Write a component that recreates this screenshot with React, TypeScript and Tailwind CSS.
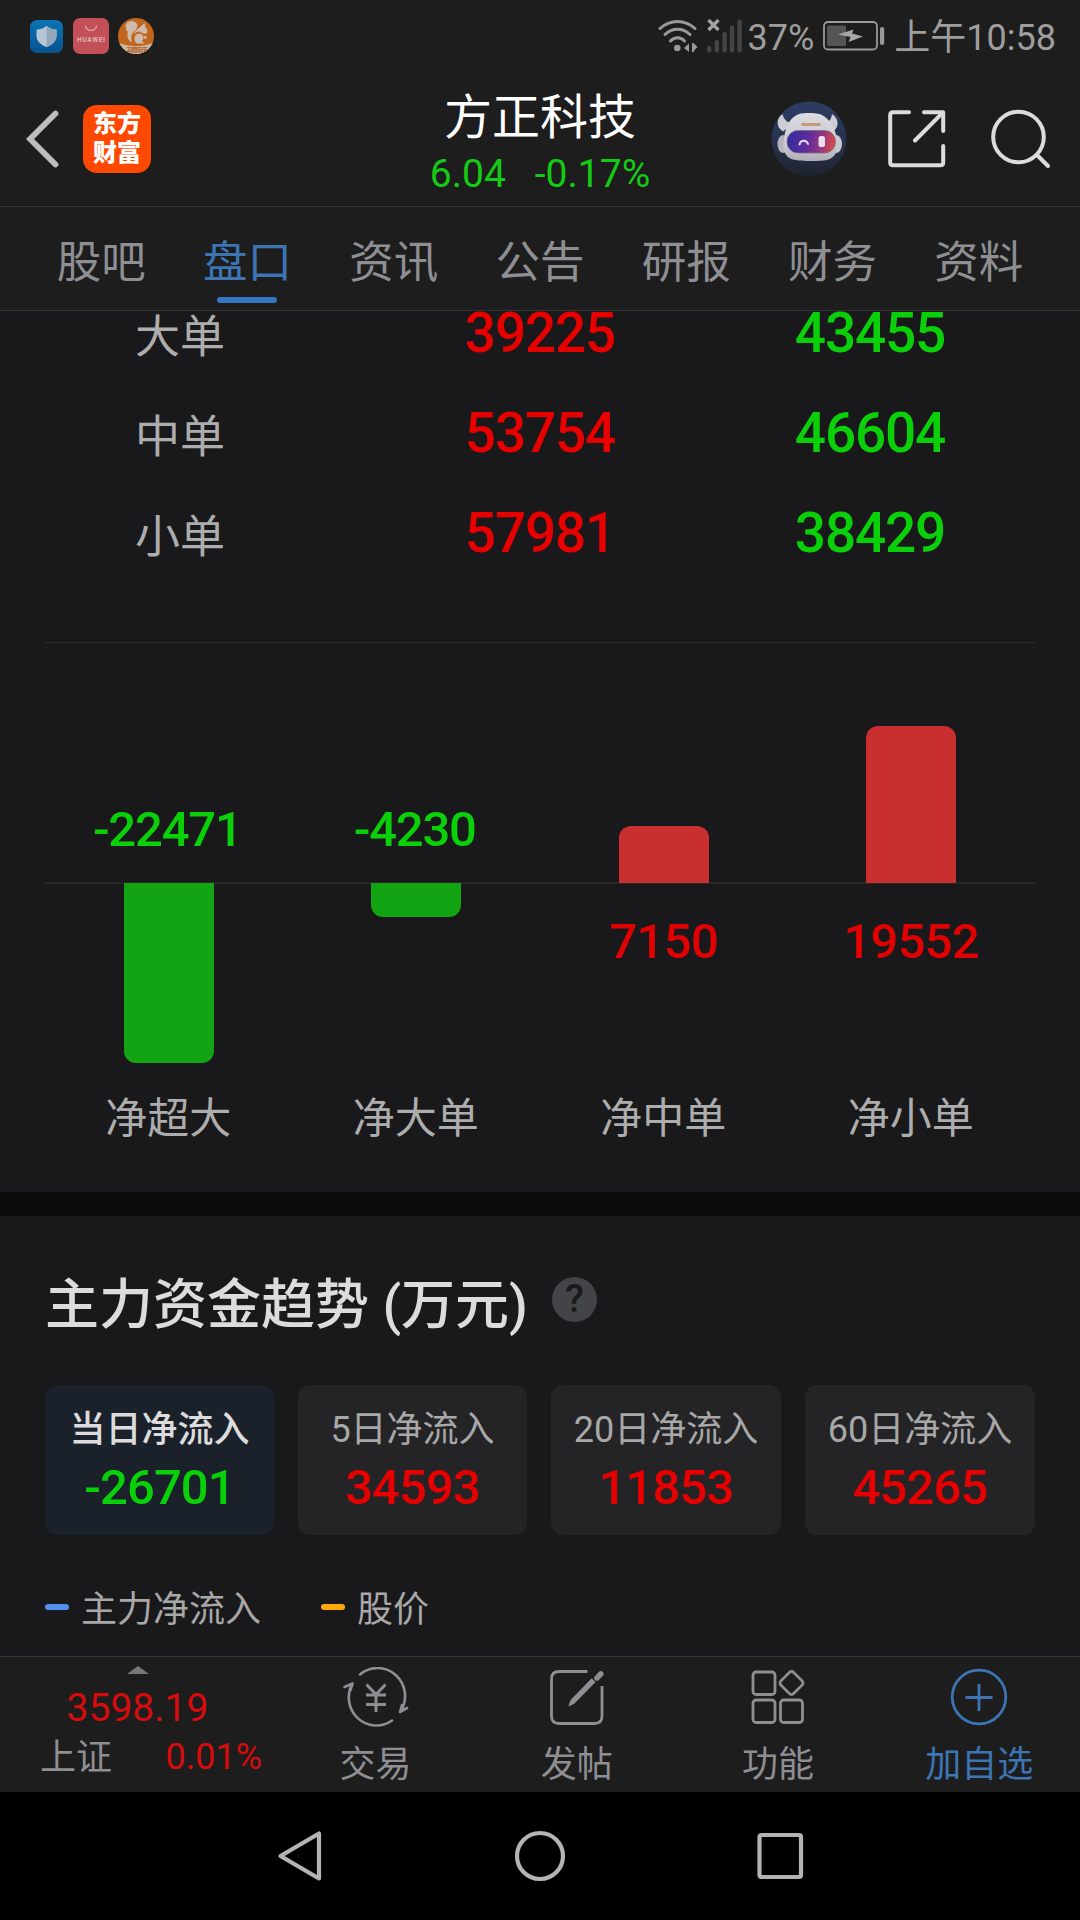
import type { ReactNode } from "react";

const RED = "text-[#e60000]";
const GREEN = "text-[#0ad00a]";

const tabs = ["股吧", "盘口", "资讯", "公告", "研报", "财务", "资料"];
const activeTab = "盘口";

const orders = [
  { label: "大单", buy: "39225", sell: "43455" },
  { label: "中单", buy: "53754", sell: "46604" },
  { label: "小单", buy: "57981", sell: "38429" },
];

const netFlows = [
  { label: "净超大", value: -22471, height: 180 },
  { label: "净大单", value: -4230, height: 34 },
  { label: "净中单", value: 7150, height: 57 },
  { label: "净小单", value: 19552, height: 157 },
];

const periods = [
  { label: "当日净流入", value: -26701 },
  { label: "5日净流入", value: 34593 },
  { label: "20日净流入", value: 11853 },
  { label: "60日净流入", value: 45265 },
];

function ShieldIcon() {
  return (
    <svg width="33" height="33" viewBox="0 0 33 33">
      <defs>
        <linearGradient id="shield-bg" x1="0" y1="0" x2="0" y2="1">
          <stop offset="0" stopColor="#0c74b4" />
          <stop offset="1" stopColor="#06528f" />
        </linearGradient>
      </defs>
      <rect width="33" height="33" rx="7" fill="url(#shield-bg)" />
      <path d="M16.5 6 C19.5 8.3 23 9.5 26.5 9.7 V16 C26.5 21.5 22 25 16.5 27 C11 25 6.5 21.5 6.5 16 V9.7 C10 9.5 13.5 8.3 16.5 6Z" fill="#b5c6d4" />
      <path d="M16.5 6 C19.5 8.3 23 9.5 26.5 9.7 V16 C26.5 21.5 22 25 16.5 27Z" fill="#93a9bb" />
    </svg>
  );
}

function HuaweiIcon() {
  return (
    <svg width="36" height="36" viewBox="0 0 36 36">
      <rect width="36" height="36" rx="7" fill="#c34f57" />
      <path d="M12.5 7.5 C13 14 23 14 23.5 7.5" fill="none" stroke="#dfa9a9" strokeWidth="1.3" />
      <text x="18" y="23.5" textAnchor="middle" textLength="28" fontSize="6.6" fontWeight="700" fontFamily="Roboto, sans-serif" fill="#e0b4b4">
        HUAWEI
      </text>
    </svg>
  );
}

function SquirrelIcon() {
  return (
    <svg width="36" height="36" viewBox="0 0 36 36">
      <defs>
        <clipPath id="squirrel-clip">
          <circle cx="18" cy="18" r="18" />
        </clipPath>
      </defs>
      <g clipPath="url(#squirrel-clip)">
        <rect width="36" height="36" fill="#c2651e" />
        <path d="M0 24 C8 29.5 28 29.5 36 24 V36 H0Z" fill="#c9b8a6" />
        <path d="M8 10 C6 4.5 13 1.5 17 4 C21 6.5 19.5 10.5 16.5 13 C13.5 15.5 12.5 19 14 24.5 C10 22.5 8.5 18 10 13.5 C8.5 13 8 11.5 8 10Z" fill="#cdbcab" />
        <path d="M20 11 L26.5 5 L27.5 9.5 C29.5 11 30 14 28.5 15.5 C26 16.5 24 14.5 21.5 13.5 C18.500 13 16.500 15 16 17.500 C15.800 14.500 17.500 12.500 20 11Z" fill="#cdbcab" />
        <path d="M16.5 20 C17 15.5 22 14.5 24.5 17 C26 18.7 25.8 21 24 23 L26.5 25.5 H19 C17 24.5 16.2 22.5 16.5 20Z" fill="#cdbcab" />
        <circle cx="27.3" cy="19.3" r="1.5" fill="#cdbcab" />
        <text x="19" y="33.6" textAnchor="middle" textLength="21" fontSize="6" fontWeight="700" fontFamily="'Noto Sans CJK SC', sans-serif" fill="#b55a1c">
          22周年庆
        </text>
      </g>
    </svg>
  );
}

function WifiIcon() {
  return (
    <svg width="40" height="34" viewBox="0 0 40 34" fill="none" stroke="#9a9a9a" strokeWidth="3" strokeLinecap="round">
      <path d="M2 9.5 C12 0 27 0 37 9.5" />
      <path d="M7 15.5 C14 8.5 25 8.5 32 15.5" />
      <path d="M12.5 22 C16.5 17.8 22.5 17.8 26.5 22" />
      <circle cx="19.3" cy="29" r="3.3" fill="#9a9a9a" stroke="none" />
      <path d="M31 24.5 V33 L26 29Z M34 24 V33 H36 V31.5 L39.5 28 L35.5 24Z" fill="#9a9a9a" stroke="none" />
    </svg>
  );
}

function SignalIcon() {
  return (
    <svg width="36" height="34" viewBox="0 0 36 34">
      <path d="M1.5 1 L11.5 11 M11.5 1 L1.5 11" stroke="#a3a3a3" strokeWidth="3.4" />
      <g fill="#444">
        <rect x="0" y="27" width="4.4" height="6.5" rx="2" />
        <rect x="7.6" y="21" width="4.4" height="12.5" rx="2" />
        <rect x="15.4" y="13" width="4.4" height="20.5" rx="2" />
        <rect x="22.8" y="6.5" width="4.4" height="27" rx="2" />
        <rect x="30.4" y="0.5" width="4.4" height="33" rx="2" />
      </g>
    </svg>
  );
}

function BatteryIcon() {
  return (
    <svg width="62" height="30" viewBox="0 0 62 30">
      <rect x="1" y="1" width="53" height="27.5" rx="4" fill="none" stroke="#9a9a9a" strokeWidth="1.8" />
      <rect x="4" y="4.5" width="19" height="20.5" rx="1.5" fill="#555" />
      <path d="M15 13.5 L30.5 8.5 L29 12.5 L40 15.5 L25.5 21 L27.5 16Z" fill="#a6a6a6" />
      <rect x="57" y="6" width="4.2" height="18" rx="2" fill="#9a9a9a" />
    </svg>
  );
}

function RobotAvatar() {
  return (
    <svg width="76" height="76" viewBox="0 0 76 76">
      <defs>
        <linearGradient id="avatar-bg" x1="0" y1="0" x2="0" y2="1">
          <stop offset="0" stopColor="#2d3d63" />
          <stop offset="0.6" stopColor="#26304a" />
          <stop offset="1" stopColor="#1f232d" />
        </linearGradient>
        <linearGradient id="avatar-head" x1="0" y1="0" x2="0" y2="1">
          <stop offset="0" stopColor="#dcdbe2" />
          <stop offset="0.7" stopColor="#c9c8d0" />
          <stop offset="1" stopColor="#aeadb6" />
        </linearGradient>
        <linearGradient id="avatar-visor" x1="0" y1="0" x2="1" y2="0.1">
          <stop offset="0" stopColor="#2f2d9c" />
          <stop offset="0.45" stopColor="#5b2b9f" />
          <stop offset="0.75" stopColor="#933580" />
          <stop offset="1" stopColor="#d0474f" />
        </linearGradient>
      </defs>
      <circle cx="38" cy="38" r="37.5" fill="url(#avatar-bg)" />
      <ellipse cx="12" cy="43" rx="5.5" ry="9" fill="#b5b4bd" />
      <ellipse cx="65.5" cy="43" rx="5.5" ry="9" fill="#c9c8cf" />
      <path d="M11.5 13 C5.5 17 4.5 26 12 30.5 L22 22 C16 22 12.500 18 11.500 13Z" fill="#cfced6" />
      <path d="M61 13 C67.500 17 69 26 62 30.500 L52 22 C58 22 60.500 18 61 13Z" fill="#cfced6" />
      <path d="M28 13 C34 11.500 46 11.500 51 14 C59 18 64 27 66 38 C68 50 64 57 56 59 C48 60.500 30 60.500 22 58.500 C14 56 11 50 13 38 C14 26 19 16 28 13Z" fill="url(#avatar-head)" />
      <rect x="16" y="29.5" width="48.5" height="22.500" rx="11" fill="url(#avatar-visor)" stroke="#77707f" strokeWidth="0.8" />
      <rect x="30" y="22" width="20" height="3" rx="1.5" fill="#c79a7c" />
      <path d="M28.5 43.5 C29.5 38.5 35.5 38.5 37 43" fill="none" stroke="#e6dcf2" strokeWidth="2" strokeLinecap="round" />
      <rect x="47.500" y="35" width="6.500" height="11" rx="2.5" fill="#eadff0" />
    </svg>
  );
}

function ShareIcon() {
  return (
    <svg width="58" height="58" viewBox="0 0 58 58" fill="none" stroke="#dcdcdc" strokeWidth="4" strokeLinecap="round" strokeLinejoin="round">
      <path d="M21 2.2 H5 Q2.2 2.2 2.2 5 V52.5 Q2.2 55.2 5 55.2 H52.5 Q55.2 55.2 55.2 52.5 V36" />
      <path d="M36 2.2 H55.2 V21 M55 2.4 L27 30.5" />
    </svg>
  );
}

function SearchIcon() {
  return (
    <svg width="60" height="60" viewBox="0 0 60 60" fill="none" stroke="#dcdcdc" strokeWidth="4" strokeLinecap="round">
      <circle cx="27.5" cy="28" r="25.3" />
      <path d="M46 46 L57 57" />
    </svg>
  );
}

function TradeIcon() {
  return (
    <svg width="66" height="60" viewBox="0 0 66 60" fill="none" stroke="#8e8e93" strokeWidth="2.6" strokeLinecap="round" strokeLinejoin="round">
      <path d="M17 7.5 A27.5 28 0 0 1 57.5 44.5 M64 41 L57 45 L59 38" />
      <path d="M49 53.5 A27.5 28 0 0 1 9.5 16.5 M1.5 20 L9.5 16.5 L7.5 23" />
      <path d="M23.5 17.5 L33 27.5 L42.5 17.5 M33 27.5 V45 M23 28 H43 M23 37.5 H43" strokeWidth="3" strokeLinecap="butt" />
    </svg>
  );
}

function PostIcon() {
  return (
    <svg width="56" height="58" viewBox="0 0 56 58" fill="none" stroke="#8e8e93" strokeWidth="2.8">
      <path d="M38.5 3.5 H10 Q2.5 3.5 2.5 11 V48 Q2.5 55.5 10 55.5 H45.5 Q53 55.5 53 48 V18" />
      <path d="M48 10 L51.8 5.8" strokeWidth="5.5" strokeLinecap="round" />
      <path d="M42.7 10.2 L46.6 14 L25 36 L19.3 38.5 L21.5 32Z" fill="#8e8e93" stroke="none" />
    </svg>
  );
}

function FeatureIcon() {
  return (
    <svg width="54" height="56" viewBox="0 0 54 56" fill="none" stroke="#8e8e93" strokeWidth="2.8">
      <rect x="2" y="3" width="22" height="22.5" rx="3" />
      <rect x="2" y="31" width="22" height="22.5" rx="3" />
      <rect x="29.5" y="31" width="22" height="22.5" rx="3" />
      <rect x="31.5" y="5" width="18" height="18" rx="3" transform="rotate(45 40.5 14)" />
    </svg>
  );
}

function AddIcon() {
  return (
    <svg width="58" height="60" viewBox="0 0 58 60" fill="none" stroke="#3c74b4" strokeWidth="2.8">
      <circle cx="29" cy="30" r="26.8" />
      <path d="M15.5 30.5 H42.5 M29 17 V44" />
    </svg>
  );
}

function ToolbarItem({ icon, label, active }: { icon: ReactNode; label: string; active?: boolean }) {
  return (
    <div className="flex flex-1 flex-col items-center">
      <div className="flex h-[79px] shrink-0 items-center justify-center">{icon}</div>
      <span className={`text-[36px] leading-[59px] ${active ? "text-[#3c74b4]" : "text-[#8e8e93]"}`}>{label}</span>
    </div>
  );
}

function StatusBar() {
  return (
    <div className="flex h-[72px] items-center justify-between pl-[30px] pr-6">
      <div className="flex items-center">
        <ShieldIcon />
        <span className="ml-2.5"><HuaweiIcon /></span>
        <span className="ml-[9px]"><SquirrelIcon /></span>
      </div>
      <div className="flex items-center text-[36px] leading-[72px] text-[#9e9e9e]">
        <WifiIcon />
        <span className="ml-[9px]"><SignalIcon /></span>
        <span className="ml-[5px] pt-[3px]">37%</span>
        <span className="ml-[9px]"><BatteryIcon /></span>
        <span className="ml-[9px] pt-[3px]">上午10:58</span>
      </div>
    </div>
  );
}

function Header() {
  return (
    <div className="grid h-[135px] grid-cols-[1fr_auto_1fr] border-b border-[#333]">
      <div className="flex items-center pl-[26px]">
        <svg width="33" height="58" viewBox="0 0 33 58" fill="none" stroke="#bdbdbd" strokeWidth="5.8">
          <path d="M29.5 3.5 L4 29 L29.5 54.5" strokeLinecap="round" />
        </svg>
        <div className="ml-6 flex size-[68px] flex-col items-center justify-center rounded-[14px] bg-[#ff4800] text-[24px] font-black leading-[29px] text-white">
          <span>东方</span>
          <span>财富</span>
        </div>
      </div>
      <div className="flex flex-col items-center pt-[14px]">
        <h1 className="text-[48px] leading-[64px] text-white">方正科技</h1>
        <div className="flex gap-[29px] pt-px text-[39px] leading-[46px] text-[#15ca15]">
          <span>6.04</span>
          <span>-0.17%</span>
        </div>
      </div>
      <div className="flex items-center justify-end pr-[29px]">
        <RobotAvatar />
        <span className="ml-[41px]"><ShareIcon /></span>
        <span className="ml-[45px]"><SearchIcon /></span>
      </div>
    </div>
  );
}

function Tabs() {
  return (
    <nav className="flex h-[104px] border-b border-[#333] px-7">
      {tabs.map((tab) => (
        <div key={tab} className="flex flex-1 flex-col items-center">
          <span className={`pt-[22px] text-[44.5px] leading-[68px] ${tab === activeTab ? "text-[#3c74b4]" : "text-[#8e8e93]"}`}>
            {tab}
          </span>
          {tab === activeTab && <div className="h-1.5 w-[60px] rounded-full bg-[#3576c2]" />}
        </div>
      ))}
    </nav>
  );
}

function OrderRows() {
  return (
    <div className="flex flex-col gap-14">
      {orders.map((row) => (
        <div key={row.label} className="grid h-11 grid-cols-[360px_360px_300px] text-center leading-[44px]">
          <span className="pt-[5px] text-[45px] text-[#adadad]">{row.label}</span>
          <span className={`text-[55px] font-medium tracking-[-1.2px] ${RED}`}>{row.buy}</span>
          <span className={`text-[55px] font-medium tracking-[-1.2px] ${GREEN}`}>{row.sell}</span>
        </div>
      ))}
    </div>
  );
}

function NetFlowChart() {
  return (
    <div className="relative mx-[45px] mt-[87px] h-[550px] border-t border-[#2a2a2c]">
      <div className="absolute inset-x-0 top-[239px] h-0.5 bg-[#262628]" />
      <div className="relative grid grid-cols-4">
        {netFlows.map((item) => {
          const up = item.value > 0;
          const bar = (
            <div
              className={`w-[90px] ${up ? "rounded-t-xl bg-[#ca2f30]" : "rounded-b-xl bg-[#12a412]"}`}
              style={{ height: item.height }}
            />
          );
          const value = (
            <span
              className={`text-[49px] font-medium leading-[60px] ${
                up ? "mt-[29px] tracking-[-0.7px] text-[#e00202]" : `mb-[23px] pr-[3px] tracking-[-1.2px] ${GREEN}`
              }`}
            >
              {item.value}
            </span>
          );
          return (
            <div key={item.label} className="flex flex-col items-center">
              <div className="flex h-60 flex-col items-center justify-end">{up ? bar : value}</div>
              <div className="flex h-[204px] flex-col items-center">{up ? value : bar}</div>
              <span className="pr-px text-[42px] leading-[64px] text-[#adadad]">{item.label}</span>
            </div>
          );
        })}
      </div>
    </div>
  );
}

function FundTrend() {
  return (
    <section className="px-[45px]">
      <div className="flex items-center pt-[52px]">
        <h2 className="text-[54px] font-medium leading-[76px] text-[#dcdcdc]">主力资金趋势 (万元)</h2>
        <span className="-mt-3.5 ml-6 flex size-[45px] items-center justify-center rounded-full bg-[#444448] text-[38px] font-medium leading-none text-[#19191b]">
          ?
        </span>
      </div>
      <div className="mt-[41px] grid grid-cols-[229px_229px_230px_230px] gap-6">
        {periods.map((item, i) => (
          <div
            key={item.label}
            className={`flex h-[150px] flex-col items-center rounded-xl pt-4 ${i === 0 ? "bg-[#1a212b]" : "bg-[#242426]"}`}
          >
            <span className={`whitespace-nowrap text-[36px] leading-[58px] ${i === 0 ? "font-medium text-[#dcdcdc]" : "text-[#a8a8a8]"}`}>
              {item.label}
            </span>
            <span className={`text-[49px] font-medium leading-[58px] tracking-[-0.9px] ${item.value > 0 ? RED : GREEN}`}>
              {item.value}
            </span>
          </div>
        ))}
      </div>
      <div className="mt-10 flex items-center text-[36px] leading-[58px] text-[#a8a8a8]">
        <i className="h-1.5 w-6 rounded-full bg-[#5390ee]" />
        <span className="ml-3 pt-1.5">主力净流入</span>
        <i className="ml-[60px] h-1.5 w-6 rounded-full bg-[#ffa80a]" />
        <span className="ml-3 pt-1.5">股价</span>
      </div>
    </section>
  );
}

function Toolbar() {
  return (
    <div className="flex h-[136px] border-t border-[#363636] bg-[#1d1d1d]">
      <div className="flex w-[275px] flex-col items-center pt-[9px]">
        <svg width="22" height="8" viewBox="0 0 22 8">
          <path d="M11 0 L22 8 H0Z" fill="#77777a" />
        </svg>
        <span className="pt-[9px] text-[39px] leading-[50px] text-[#d60c0c]">3598.19</span>
        <div className="flex w-full justify-between pl-10 pr-[13px] text-[36px] leading-[50px]">
          <span className="text-[#8e8e93]">上证</span>
          <span className="-mt-px text-[#d60c0c]">0.01%</span>
        </div>
      </div>
      <ToolbarItem icon={<TradeIcon />} label="交易" />
      <ToolbarItem icon={<PostIcon />} label="发帖" />
      <ToolbarItem icon={<FeatureIcon />} label="功能" />
      <ToolbarItem icon={<AddIcon />} label="加自选" active />
    </div>
  );
}

function NavigationBar() {
  return (
    <div className="flex h-32 items-center justify-center gap-[189px] bg-black">
      <svg width="52" height="52" viewBox="0 0 52 52" fill="none" stroke="#b4b4b4" strokeWidth="4.2" strokeLinejoin="round">
        <path d="M46 3.5 V48.5 L7.5 26Z" />
      </svg>
      <svg width="52" height="52" viewBox="0 0 52 52" fill="none" stroke="#b4b4b4" strokeWidth="4.2">
        <circle cx="26" cy="26" r="23" />
      </svg>
      <svg width="52" height="52" viewBox="0 0 52 52" fill="none" stroke="#b4b4b4" strokeWidth="4.2">
        <rect x="4.5" y="5" width="41.5" height="42" rx="2" />
      </svg>
    </div>
  );
}

export default function App() {
  return (
    <div className="flex h-[1920px] w-[1080px] flex-col overflow-hidden bg-[#1d1d1d] font-[Roboto,'Noto_Sans_CJK_SC',sans-serif]">
      <StatusBar />
      <Header />
      <Tabs />
      <main className="min-h-0 flex-1 bg-[#19191b]">
        <OrderRows />
        <NetFlowChart />
        <div className="h-6 bg-[#0c0c0c]" />
        <FundTrend />
      </main>
      <Toolbar />
      <NavigationBar />
    </div>
  );
}
